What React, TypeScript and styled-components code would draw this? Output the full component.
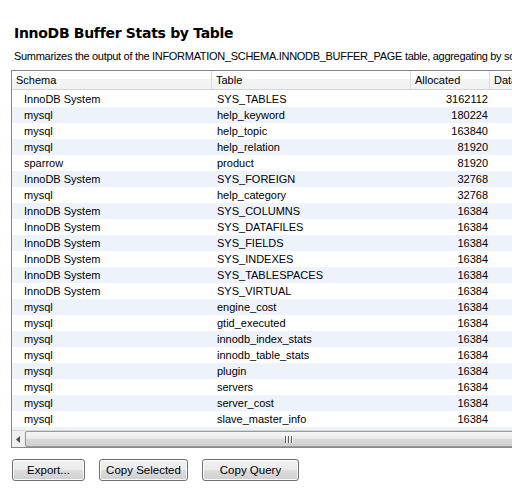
import styled, { createGlobalStyle } from "styled-components";

const GlobalStyle = createGlobalStyle`
  html, body {
    margin: 0;
    padding: 0;
    background: #ffffff;
    overflow: hidden;
  }
  body {
    font-family: "Liberation Sans", Arial, sans-serif;
    font-size: 11px;
    color: #000000;
  }
`;

type Row = { schema: string; table: string; allocated: string };

const rows: Row[] = [
  { schema: "InnoDB System", table: "SYS_TABLES", allocated: "3162112" },
  { schema: "mysql", table: "help_keyword", allocated: "180224" },
  { schema: "mysql", table: "help_topic", allocated: "163840" },
  { schema: "mysql", table: "help_relation", allocated: "81920" },
  { schema: "sparrow", table: "product", allocated: "81920" },
  { schema: "InnoDB System", table: "SYS_FOREIGN", allocated: "32768" },
  { schema: "mysql", table: "help_category", allocated: "32768" },
  { schema: "InnoDB System", table: "SYS_COLUMNS", allocated: "16384" },
  { schema: "InnoDB System", table: "SYS_DATAFILES", allocated: "16384" },
  { schema: "InnoDB System", table: "SYS_FIELDS", allocated: "16384" },
  { schema: "InnoDB System", table: "SYS_INDEXES", allocated: "16384" },
  { schema: "InnoDB System", table: "SYS_TABLESPACES", allocated: "16384" },
  { schema: "InnoDB System", table: "SYS_VIRTUAL", allocated: "16384" },
  { schema: "mysql", table: "engine_cost", allocated: "16384" },
  { schema: "mysql", table: "gtid_executed", allocated: "16384" },
  { schema: "mysql", table: "innodb_index_stats", allocated: "16384" },
  { schema: "mysql", table: "innodb_table_stats", allocated: "16384" },
  { schema: "mysql", table: "plugin", allocated: "16384" },
  { schema: "mysql", table: "servers", allocated: "16384" },
  { schema: "mysql", table: "server_cost", allocated: "16384" },
  { schema: "mysql", table: "slave_master_info", allocated: "16384" },
  { schema: "mysql", table: "slave_relay_log_info", allocated: "16384" },
];

const COLS = "200px 199px 79px 60px";

export default function App() {
  return (
    <>
      <GlobalStyle />
      <Page>
        <Title>InnoDB Buffer Stats by Table</Title>
        <Desc>
          Summarizes the output of the INFORMATION_SCHEMA.INNODB_BUFFER_PAGE table, aggregating by schema and table name.
        </Desc>
        <Grid>
          <Header>
            <HeadCell>Schema</HeadCell>
            <HeadCell>Table</HeadCell>
            <HeadCell>Allocated</HeadCell>
            <HeadCell>Data</HeadCell>
          </Header>
          <Body>
            {rows.map((r, i) => (
              <DataRow key={i} $alt={i % 2 === 1}>
                <SchemaCell>{r.schema}</SchemaCell>
                <Cell>{r.table}</Cell>
                <NumCell>{r.allocated}</NumCell>
                <Cell />
              </DataRow>
            ))}
          </Body>
          <HScroll>
            <ArrowBtn>
              <svg width="4" height="7" viewBox="0 0 4 7">
                <path d="M4 0 L0 3.5 L4 7 Z" fill="#4d4d4d" />
              </svg>
            </ArrowBtn>
            <Thumb>
              <Grip>
                <span />
                <span />
                <span />
              </Grip>
            </Thumb>
          </HScroll>
        </Grid>
        <Buttons>
          <Button $w={73}>Export...</Button>
          <Button $w={89}>Copy Selected</Button>
          <Button $w={97}>Copy Query</Button>
        </Buttons>
      </Page>
    </>
  );
}

const Page = styled.div`
  padding: 23px 0 0 11px;
  width: 560px;
`;

const Title = styled.h1`
  margin: 0 0 0 3px;
  font-family: "DejaVu Sans", Verdana, sans-serif;
  font-weight: bold;
  font-size: 14px;
  line-height: 20px;
  letter-spacing: -0.3px;
`;

const Desc = styled.div`
  margin: 6px 0 0 3px;
  line-height: 14px;
  white-space: nowrap;
  letter-spacing: -0.3px;
`;

const Grid = styled.div`
  margin-top: 7px;
  width: 540px;
  height: 376px;
  border: 1px solid #828790;
  display: flex;
  flex-direction: column;
  overflow: hidden;
`;

const Header = styled.div`
  display: grid;
  grid-template-columns: ${COLS};
  height: 19px;
  flex-shrink: 0;
  background: linear-gradient(#ffffff 0%, #ffffff 45%, #f3f4f6 46%, #f1f2f4 100%);
  border-bottom: 1px solid #d5d5d5;
  box-sizing: border-box;
`;

const HeadCell = styled.div`
  padding-left: 4px;
  line-height: 19px;
  border-right: 1px solid #dcdcdc;
  white-space: nowrap;
  overflow: hidden;
`;

const Body = styled.div`
  flex: 1;
  overflow: hidden;
  padding-top: 1px;
`;

const DataRow = styled.div<{ $alt: boolean }>`
  display: grid;
  grid-template-columns: ${COLS};
  height: 16px;
  line-height: 16px;
  background: ${(p) => (p.$alt ? "#eef3fb" : "#ffffff")};
`;

const Cell = styled.div`
  padding-left: 5px;
  white-space: nowrap;
  overflow: hidden;
`;

const SchemaCell = styled(Cell)`
  padding-left: 12px;
`;

const NumCell = styled(Cell)`
  text-align: right;
  padding-right: 2px;
`;

const HScroll = styled.div`
  height: 17px;
  flex-shrink: 0;
  display: flex;
  background: #e8e8e8;
  border-top: 1px solid #d7d7d7;
  box-sizing: border-box;
`;

const ArrowBtn = styled.div`
  width: 17px;
  display: flex;
  align-items: center;
  justify-content: center;
  background: #f0f0f0;
`;

const Thumb = styled.div`
  width: 720px;
  margin: 0 0 0 1px;
  border: 1px solid #9a9a9a;
  border-radius: 2px;
  background: linear-gradient(#f6f6f6 0%, #e9e9e9 50%, #d9d9d9 51%, #cfcfcf 100%);
  display: flex;
  align-items: center;
  justify-content: center;
  box-sizing: border-box;
`;

const Grip = styled.div`
  display: flex;
  gap: 2px;
  span {
    width: 1px;
    height: 7px;
    background: #5a5a5a;
    box-shadow: 1px 0 0 #ffffff;
  }
`;

const Buttons = styled.div`
  display: flex;
  gap: 14px;
  margin-top: 11px;
  padding-left: 1px;
`;

const Button = styled.button<{ $w: number }>`
  width: ${(p) => p.$w}px;
  height: 22px;
  padding: 0;
  font-family: "Liberation Sans", Arial, sans-serif;
  font-size: 11.5px;
  color: #000;
  border: 1px solid #707070;
  border-radius: 3px;
  background: linear-gradient(#f2f2f2 0%, #ebebeb 50%, #dddddd 51%, #cfcfcf 100%);
  box-shadow: inset 0 0 0 1px #fcfcfc;
`;
